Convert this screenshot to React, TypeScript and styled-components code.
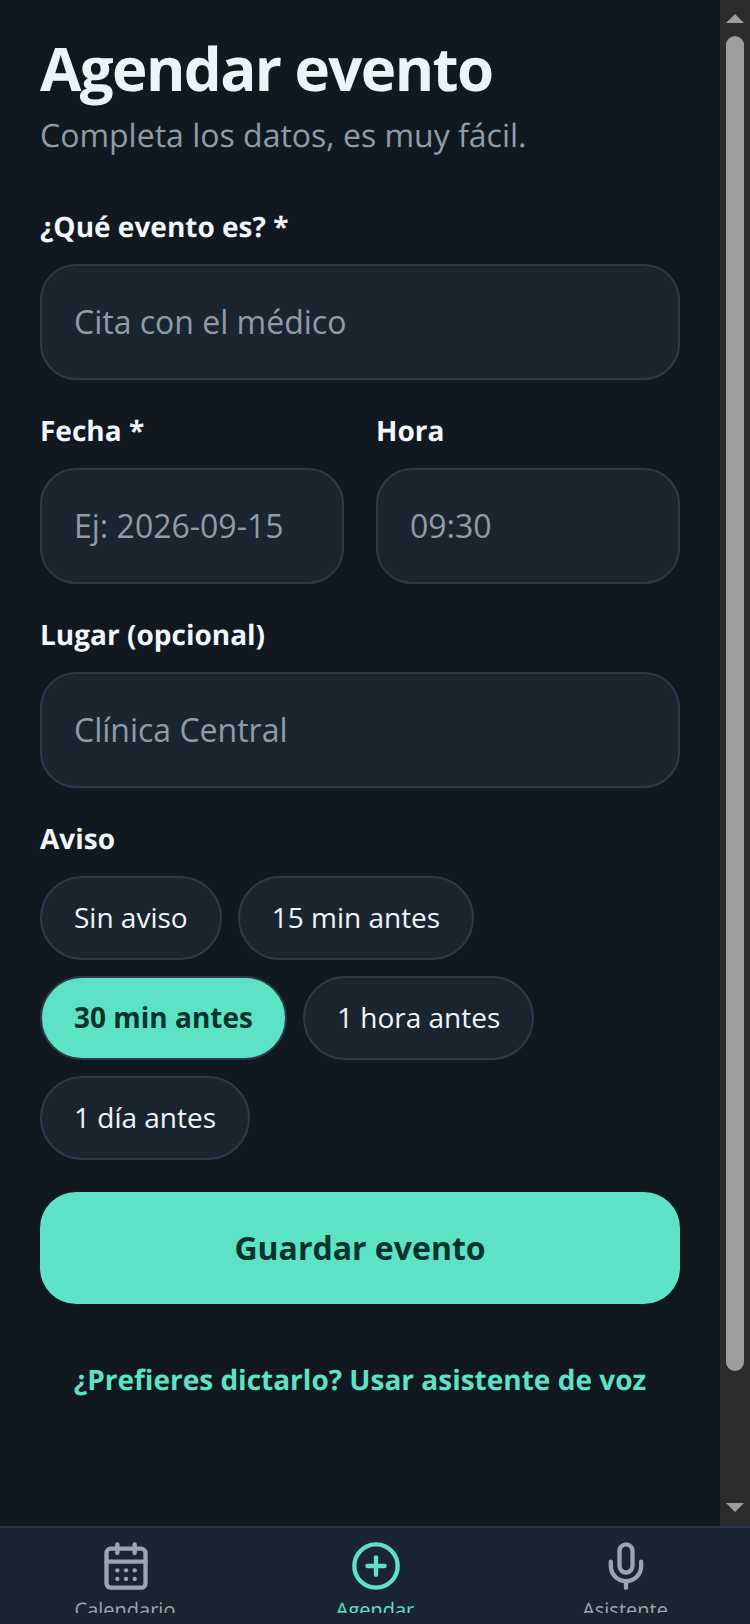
import { CalendarDays, CirclePlus, Mic } from "lucide-react"
import styled, { createGlobalStyle } from "styled-components"

const reminders = ["Sin aviso", "15 min antes", "30 min antes", "1 hora antes", "1 día antes"]
const tabs = [
  { label: "Calendario", Icon: CalendarDays },
  { label: "Agendar", Icon: CirclePlus, active: true },
  { label: "Asistente", Icon: Mic },
]

function App() {
  return (
    <>
      <GlobalStyle />
      <Screen>
        <Body>
          <Content>
            <Title>Agendar evento</Title>
            <Subtitle>Completa los datos, es muy fácil.</Subtitle>
            <Field>
              <Label>¿Qué evento es? *</Label>
              <Input placeholder="Cita con el médico" />
            </Field>
            <Row>
              <Field>
                <Label>Fecha *</Label>
                <Input placeholder="Ej: 2026-09-15" />
              </Field>
              <Field>
                <Label>Hora</Label>
                <Input placeholder="09:30" />
              </Field>
            </Row>
            <Field>
              <Label>Lugar (opcional)</Label>
              <Input placeholder="Clínica Central" />
            </Field>
            <Field>
              <Label>Aviso</Label>
              <Chips>
                {reminders.map((r) => (
                  <Chip key={r} $selected={r === "30 min antes"}>
                    {r}
                  </Chip>
                ))}
              </Chips>
            </Field>
            <SaveButton>Guardar evento</SaveButton>
            <VoiceLink>¿Prefieres dictarlo? Usar asistente de voz</VoiceLink>
          </Content>
          <ScrollTrack>
            <ArrowUp />
            <ScrollThumb />
            <ArrowDown />
          </ScrollTrack>
        </Body>
        <TabBar>
          {tabs.map(({ label, Icon, active }) => (
            <Tab key={label} $active={active}>
              <Icon size={52} strokeWidth={2} />
              <span>{label}</span>
            </Tab>
          ))}
        </TabBar>
      </Screen>
    </>
  )
}

export default App

const GlobalStyle = createGlobalStyle`
  html, body {
    margin: 0;
    background: #111820;
  }
  * {
    box-sizing: border-box;
  }
`

const Screen = styled.div`
  width: 750px;
  height: 1624px;
  display: flex;
  flex-direction: column;
  overflow: hidden;
  font-family: "Open Sans", "Noto Sans", sans-serif;
  text-rendering: geometricPrecision;
  background: #111820;
  color: #f0f6fa;
`

const Body = styled.div`
  flex: 1;
  min-height: 0;
  display: flex;
`

const Content = styled.main`
  flex: 1;
  min-width: 0;
  padding: 22px 40px 0;
`

const Title = styled.h1`
  margin: 0;
  font-size: 60px;
  line-height: 92px;
  font-weight: 700;
  letter-spacing: -1.6px;
  color: #edf4f8;
`

const Subtitle = styled.p`
  margin: 0 0 48px;
  font-size: 32px;
  line-height: 44px;
  color: #8f9ca8;
`

const Field = styled.div`
  flex: 1;
  min-width: 0;
  margin-bottom: 30px;
`

const Label = styled.label`
  display: block;
  margin-bottom: 16px;
  font-size: 28px;
  line-height: 42px;
  font-weight: 700;
  color: #f0f6fa;
`

const Input = styled.input`
  display: block;
  width: 100%;
  height: 116px;
  padding: 0 32px 2px;
  border: 2px solid #2c3a4a;
  border-radius: 36px;
  outline: none;
  background: #1a2530;
  font-family: inherit;
  font-size: 32px;
  color: #f0f6fa;

  &::placeholder {
    color: #8f9ca8;
    opacity: 1;
  }
`

const Row = styled.div`
  display: flex;
  gap: 32px;
`

const Chips = styled.div`
  display: flex;
  flex-wrap: wrap;
  gap: 16px;
`

const Chip = styled.button<{ $selected?: boolean }>`
  height: 84px;
  padding: 0 32px 2px;
  border: 2px solid #2c3a4a;
  border-radius: 42px;
  background: ${(p) => (p.$selected ? "#5ee2c6" : "#1a2530")};
  font-family: inherit;
  font-size: 28px;
  font-weight: ${(p) => (p.$selected ? 700 : 400)};
  color: ${(p) => (p.$selected ? "#06332b" : "#f0f6fa")};
`

const SaveButton = styled.button`
  display: block;
  width: 100%;
  height: 112px;
  margin-top: 32px;
  padding: 0 0 2px;
  border: none;
  border-radius: 36px;
  background: #5ee2c6;
  font-family: inherit;
  font-size: 32px;
  font-weight: 700;
  color: #06332b;
`

const VoiceLink = styled.a`
  display: block;
  margin-top: 56px;
  text-align: center;
  font-size: 28px;
  line-height: 40px;
  font-weight: 700;
  color: #5ee2c6;
`

const ScrollTrack = styled.div`
  width: 30px;
  flex: none;
  display: flex;
  flex-direction: column;
  align-items: center;
  background: #2c2c2c;
`

const ArrowUp = styled.div`
  flex: none;
  margin: 14px 0 13px;
  border-left: 9px solid transparent;
  border-right: 9px solid transparent;
  border-bottom: 9px solid #9d9d9d;
`

const ArrowDown = styled.div`
  flex: none;
  margin: 132px 0 14px;
  border-left: 9px solid transparent;
  border-right: 9px solid transparent;
  border-top: 9px solid #9d9d9d;
`

const ScrollThumb = styled.div`
  flex: 1;
  width: 18px;
  border-radius: 9px;
  background: #9d9d9d;
`

const TabBar = styled.nav`
  flex: none;
  height: 98px;
  display: flex;
  padding-top: 12px;
  padding-bottom: 11px;
  border-top: 2px solid #2c3648;
  background: #1b2431;
`

const Tab = styled.a<{ $active?: boolean }>`
  flex: 1;
  min-height: 0;
  overflow: hidden;
  display: flex;
  flex-direction: column;
  align-items: center;
  gap: 4px;
  color: ${(p) => (p.$active ? "#5ee2c6" : "#9aa5b1")};

  svg {
    flex: none;
    margin-left: 2px;
  }

  span {
    flex: none;
    font-size: 20px;
    line-height: 28px;
  }
`
